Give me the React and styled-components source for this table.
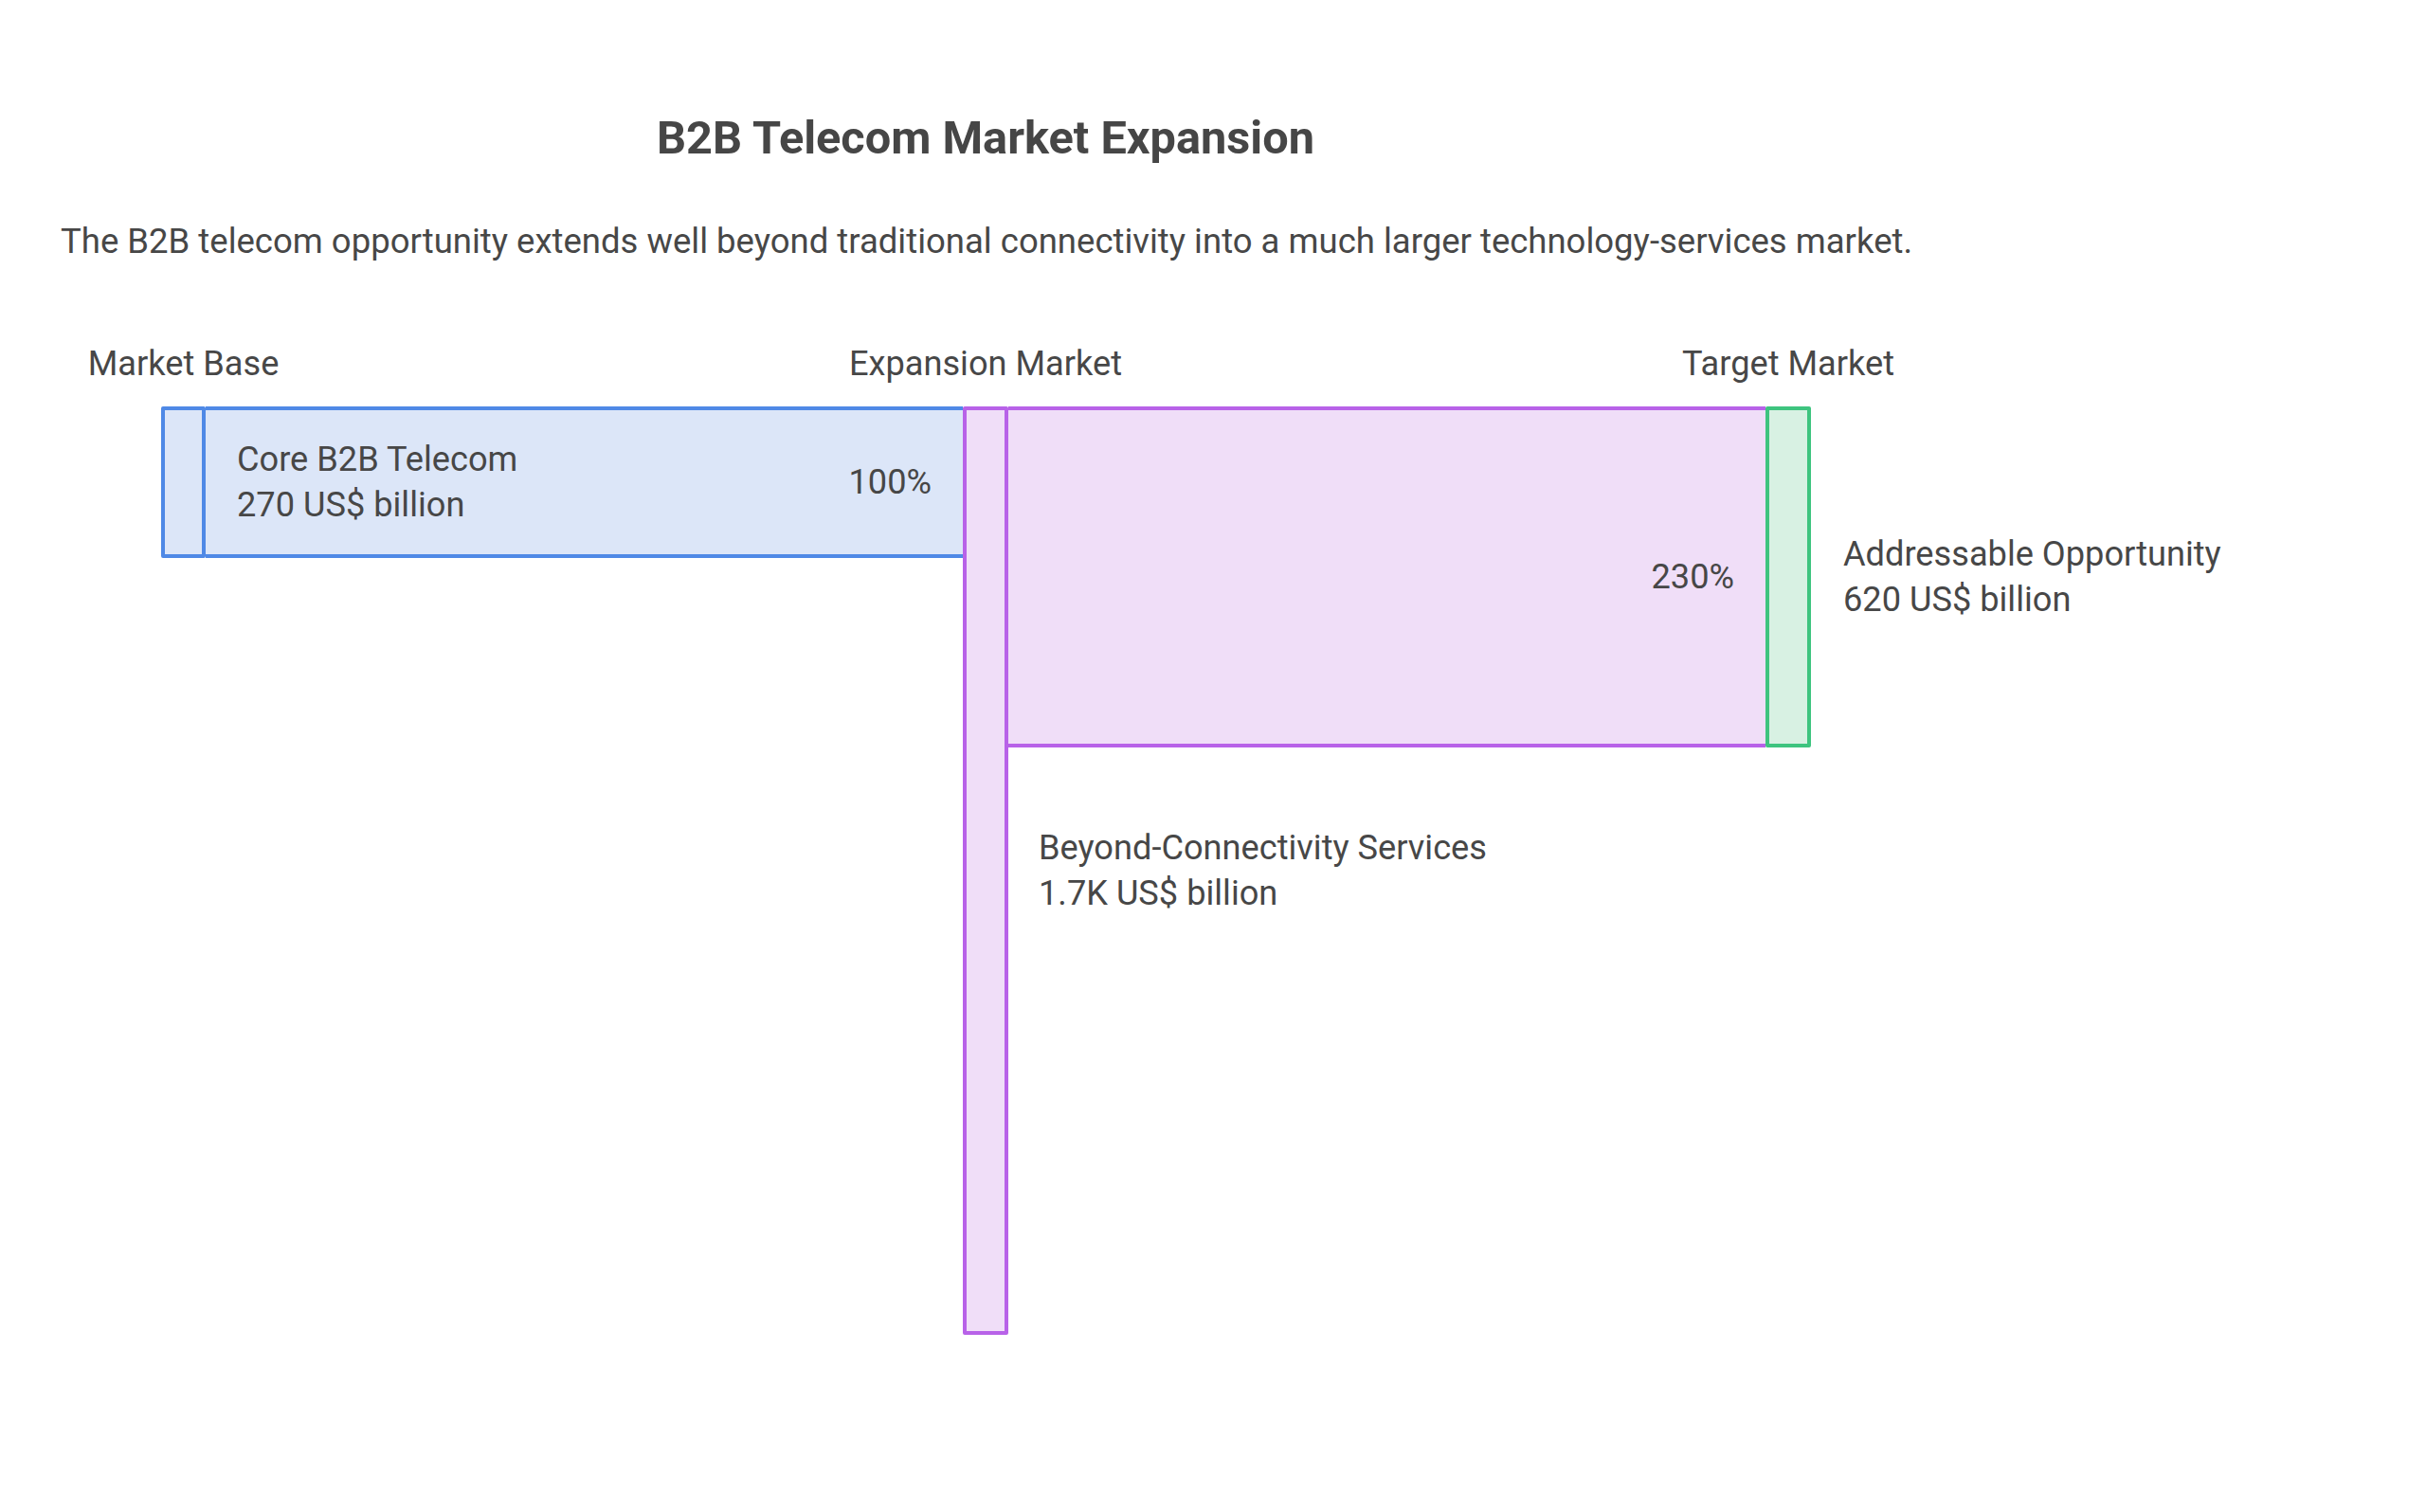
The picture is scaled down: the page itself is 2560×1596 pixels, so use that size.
import React from "react";
import styled, { createGlobalStyle } from "styled-components";

const GlobalStyle = createGlobalStyle`
  html, body {
    margin: 0;
    padding: 0;
    background: #ffffff;
  }
  body {
    font-family: Roboto, "Liberation Sans", Arial, sans-serif;
    color: #474747;
  }
`;

const tones = {
  blue: { line: "#4f89e6", fill: "#dce6f8" },
  purple: { line: "#b862e8", fill: "#f0def8" },
  green: { line: "#3ec47f", fill: "#d8f1e3" },
};

const Page = styled.div`
  width: 2560px;
  min-height: 1596px;
  box-sizing: border-box;
  padding: 117px 0 0 64px;
`;

const Content = styled.div`
  width: 1952px;
`;

const Title = styled.h1`
  margin: 0;
  font-size: 48.7px;
  line-height: 58px;
  font-weight: 700;
  text-align: center;
  color: #464646;
`;

const Lead = styled.p`
  margin: 54px 0 0;
  font-size: 36.5px;
  line-height: 51px;
  font-weight: 400;
  white-space: nowrap;
`;

const Diagram = styled.div`
  display: grid;
  grid-template-columns: 47px 799px 48px 799px 48px auto;
  grid-template-rows: auto 360px auto;
  margin: 80px 0 0 106px;
`;

const Header = styled.div`
  grid-row: 1;
  grid-column: ${({ $col }) => $col};
  display: flex;
  justify-content: center;
  white-space: nowrap;
  font-size: 36.2px;
  line-height: 48px;
  margin-bottom: 21px;
`;

const Node = styled.div`
  grid-row: ${({ $rows }) => $rows || 2};
  grid-column: ${({ $col }) => $col};
  align-self: start;
  height: ${({ $h }) => $h}px;
  box-sizing: border-box;
  border: 4px solid ${({ $tone }) => tones[$tone].line};
  border-radius: 2px;
  background: ${({ $tone }) => tones[$tone].fill};
  position: relative;
  z-index: 1;
`;

const Band = styled.div`
  grid-row: 2;
  grid-column: ${({ $col }) => $col};
  align-self: start;
  height: ${({ $h }) => $h}px;
  box-sizing: border-box;
  border-top: 4px solid ${({ $tone }) => tones[$tone].line};
  border-bottom: 4px solid ${({ $tone }) => tones[$tone].line};
  background: ${({ $tone }) => tones[$tone].fill};
  display: flex;
  align-items: center;
  justify-content: space-between;
  padding: 0 33px;
  font-size: 36.2px;
  line-height: 48px;
  white-space: nowrap;
`;

const Label = styled.div`
  display: flex;
  flex-direction: column;
  font-size: 36.2px;
  line-height: 48px;
  white-space: nowrap;
`;

const Percent = styled.span`
  margin-left: auto;
`;

const SideLabel = styled(Label)`
  grid-row: 2;
  grid-column: 6;
  align-self: center;
  padding-left: 34px;
`;

const BelowLabel = styled(Label)`
  grid-row: 3;
  grid-column: 4 / span 3;
  padding: 82px 0 0 32px;
`;

export default function App() {
  return (
    <>
      <GlobalStyle />
      <Page>
        <Content>
          <Title>B2B Telecom Market Expansion</Title>
          <Lead>
            The B2B telecom opportunity extends well beyond traditional
            connectivity into a much larger technology-services market.
          </Lead>
          <Diagram>
            <Header $col={1}>Market Base</Header>
            <Header $col={3}>Expansion Market</Header>
            <Header $col={5}>Target Market</Header>

            <Node $col={1} $tone="blue" $h={160} />
            <Band $col={2} $tone="blue" $h={160}>
              <Label>
                <span>Core B2B Telecom</span>
                <span>270 US$ billion</span>
              </Label>
              <Percent>100%</Percent>
            </Band>

            <Node $col={3} $rows="2 / span 2" $tone="purple" $h={980} />
            <Band $col={4} $tone="purple" $h={360}>
              <Percent>230%</Percent>
            </Band>
            <Node $col={5} $tone="green" $h={360} />

            <SideLabel>
              <span>Addressable Opportunity</span>
              <span>620 US$ billion</span>
            </SideLabel>
            <BelowLabel>
              <span>Beyond-Connectivity Services</span>
              <span>1.7K US$ billion</span>
            </BelowLabel>
          </Diagram>
        </Content>
      </Page>
    </>
  );
}
